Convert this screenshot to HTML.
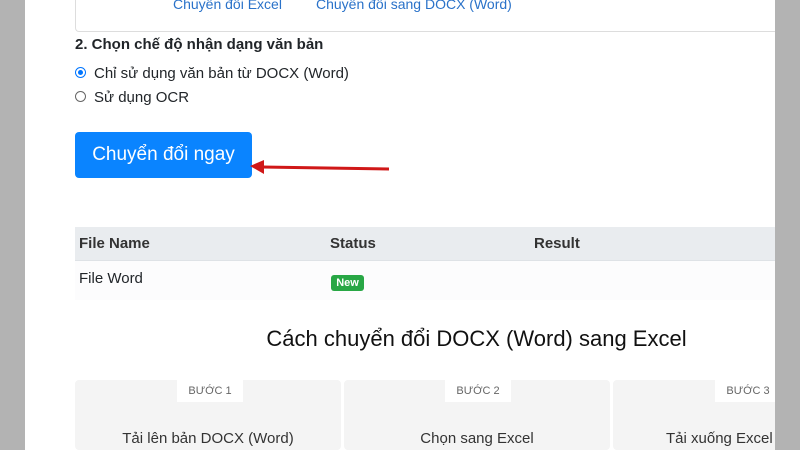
<!DOCTYPE html>
<html><head><meta charset="utf-8"><style>
body{margin:0;width:800px;height:450px;overflow:hidden;background:#fff;font-family:"Liberation Sans","DejaVu Sans",sans-serif;color:#212529;position:relative}
.a{position:absolute}
.side{background:#b3b3b3;top:0;height:450px;z-index:5}
.card{background:#f4f4f4;top:380px;height:70px;border-radius:4px}
.lbl{background:#fff;top:0;height:22px;width:66px;font-size:11px;color:#666;text-align:center;line-height:22px}
.ct{top:50px;width:100%;text-align:center;font-size:15px;color:#333}
</style></head><body>
<div class="a side" style="left:0;width:25px"></div>
<div class="a side" style="left:775px;width:25px"></div>
<div class="a" style="left:75px;top:-10px;width:705px;height:40px;border:1px solid #ddd;border-radius:4px;border-right:none"></div>
<div class="a" style="left:173px;top:-4px;font-size:14px;color:#2a72c9">Chuyển đổi Excel</div>
<div class="a" style="left:316px;top:-4px;font-size:14px;color:#2a72c9">Chuyển đổi sang DOCX (Word)</div>
<div class="a" style="left:75px;top:36px;font-size:15px;font-weight:bold">2. Chọn chế độ nhận dạng văn bản</div>
<div class="a" style="left:75px;top:67px;width:9px;height:9px;border-radius:50%;border:1px solid #0075ff;background:#fff"><div style="margin:2px;width:5px;height:5px;border-radius:50%;background:#0075ff"></div></div>
<div class="a" style="left:94px;top:65px;font-size:15px">Chỉ sử dụng văn bản từ DOCX (Word)</div>
<div class="a" style="left:75px;top:91px;width:9px;height:9px;border-radius:50%;border:1px solid #666"></div>
<div class="a" style="left:94px;top:89px;font-size:15px">Sử dụng OCR</div>
<div class="a" style="left:75px;top:132px;width:177px;height:46px;background:#0a84ff;border-radius:4px;color:#fff;font-size:19px;line-height:46px;text-align:center">Chuyển đổi ngay</div>
<svg class="a" style="left:0;top:0" width="800" height="450"><line x1="389" y1="169" x2="262" y2="167" stroke="#d01818" stroke-width="3"/><polygon points="250,166 264,160 264,174" fill="#d01818"/></svg>
<div class="a" style="left:75px;top:227px;width:700px;height:33px;background:#e9ecef;border-bottom:1px solid #dee2e6"></div>
<div class="a" style="left:79px;top:235px;font-size:15px;font-weight:bold;color:#333">File Name</div>
<div class="a" style="left:330px;top:235px;font-size:15px;font-weight:bold;color:#333">Status</div>
<div class="a" style="left:534px;top:235px;font-size:15px;font-weight:bold;color:#333">Result</div>
<div class="a" style="left:75px;top:261px;width:700px;height:39px;background:#fcfcfd"></div>
<div class="a" style="left:79px;top:270px;font-size:15px">File Word</div>
<div class="a" style="left:331px;top:275px;width:33px;height:16px;background:#28a745;border-radius:3px;color:#fff;font-size:11px;font-weight:bold;text-align:center;line-height:16px">New</div>
<div class="a" style="left:75px;top:326px;width:803px;text-align:center;font-size:22px;color:#111">Cách chuyển đổi DOCX (Word) sang Excel</div>
<div class="a card" style="left:75px;width:266px"><div class="a lbl" style="left:102px">BƯỚC 1</div><div class="a ct">Tải lên bản DOCX (Word)</div></div>
<div class="a card" style="left:344px;width:266px"><div class="a lbl" style="left:101px">BƯỚC 2</div><div class="a ct">Chọn sang Excel</div></div>
<div class="a card" style="left:613px;width:162px;border-radius:4px 0 0 4px;overflow:hidden"><div class="a lbl" style="left:102px">BƯỚC 3</div><div class="a" style="top:50px;left:53px;font-size:15px;color:#333;white-space:nowrap">Tải xuống Excel của bạn</div></div>
</body></html>
